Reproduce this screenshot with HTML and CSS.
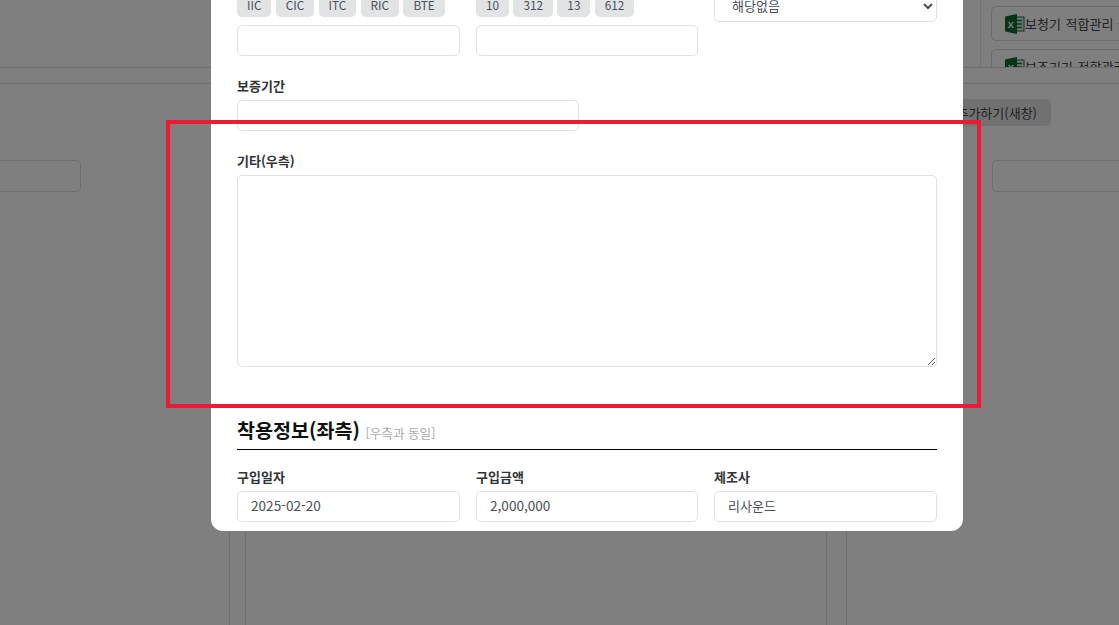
FILE: index.html
```html
<!DOCTYPE html>
<html lang="ko">
<head>
<meta charset="utf-8">
<title>착용정보</title>
<link rel="stylesheet" href="styles.css">
</head>
<body>
<div class="page">
  <header class="top">
    <div class="top-side">
      <a class="excel-btn"><svg class="xl" viewBox="0 0 20 20"><rect x="8" y="3" width="11" height="14" fill="#dfe8e2" stroke="#1d6f42"/><path d="M11 6.500h6M11 10h6M11 13.500h6" stroke="#1d6f42" stroke-width="1.500"/><path d="M0 2.500 12 0v20L0 17.500z" fill="#0f6b38"/><text x="5.800" y="13.500" class="xl-x">X</text></svg>보청기 적합관리 급여</a>
      <a class="excel-btn"><svg class="xl" viewBox="0 0 20 20"><rect x="8" y="3" width="11" height="14" fill="#dfe8e2" stroke="#1d6f42"/><path d="M11 6.500h6M11 10h6M11 13.500h6" stroke="#1d6f42" stroke-width="1.500"/><path d="M0 2.500 12 0v20L0 17.500z" fill="#0f6b38"/><text x="5.800" y="13.500" class="xl-x">X</text></svg>보조기기 적합관리 급여</a>
    </div>
  </header>
  <div class="strip"></div>
  <div class="toolbar"><button class="add-btn" type="button">추가하기(새창)</button></div>
  <div class="search-row">
    <div class="bg-input bg-left"></div>
    <div class="bg-input bg-right"></div>
  </div>
  <div class="panels">
    <div class="panel"></div>
    <div class="panel panel-mid"></div>
    <div class="panel panel-side"></div>
  </div>
</div>

<div class="overlay">
  <div class="modal">
    <div class="grid3">
      <div class="field">
        <div class="chips">
          <span class="chip">IIC</span><span class="chip">CIC</span><span class="chip">ITC</span><span class="chip">RIC</span><span class="chip">BTE</span>
        </div>
        <input class="control" type="text">
      </div>
      <div class="field">
        <div class="chips">
          <span class="chip">10</span><span class="chip">312</span><span class="chip">13</span><span class="chip">612</span>
        </div>
        <input class="control" type="text">
      </div>
      <div class="field">
        <select class="control control-ko"><option>해당없음</option></select>
      </div>
    </div>

    <div class="grid2">
      <div class="field">
        <label class="label">보증기간</label>
        <input class="control" type="text">
      </div>
    </div>

    <div class="field field-note">
      <label class="label">기타(우측)</label>
      <textarea class="control note"></textarea>
    </div>

    <h2 class="section-title">착용정보(좌측) <small class="section-note">[우측과 동일]</small></h2>

    <div class="grid3 grid-last">
      <div class="field">
        <label class="label">구입일자</label>
        <input class="control" type="text" value="2025-02-20">
      </div>
      <div class="field">
        <label class="label">구입금액</label>
        <input class="control" type="text" value="2,000,000">
      </div>
      <div class="field">
        <label class="label">제조사</label>
        <input class="control control-ko" type="text" value="리사운드">
      </div>
    </div>
  </div>
</div>

<div class="highlight"></div>
</body>
</html>
```
FILE: styles.css
```css
* { box-sizing: border-box; }
html, body { margin: 0; height: 100%; overflow: hidden; }
body {
  font-family: "Noto Sans CJK KR", "Noto Sans", sans-serif;
  font-size: 14px;
  color: #333;
  background: #fff;
}

/* page behind the dialog */
.page { height: 625px; display: flex; flex-direction: column; overflow: hidden; }
.top {
  height: 68px;
  flex: none;
  display: flex;
  justify-content: flex-end;
  border-bottom: 1px solid #dcdcdc;
  overflow: hidden;
}
.top-side {
  width: 139px;
  border-left: 1px solid #e4e4e4;
  padding: 6px 0 0 10px;
  display: flex;
  flex-direction: column;
  gap: 8px;
}
.excel-btn {
  display: flex;
  align-items: center;
  flex: none;
  width: 220px;
  height: 35px;
  padding-left: 13px;
  border: 1px solid #d8d8d8;
  border-radius: 5px;
  white-space: nowrap;
  font-size: 13px;
  word-spacing: 1px;
  color: #444;
}
.xl { width: 20px; height: 20px; flex: none; }
.xl-x { font: 700 9px "Liberation Sans", sans-serif; fill: #fff; text-anchor: middle; }
.strip { height: 16px; flex: none; border-bottom: 1px solid #dcdcdc; }
.toolbar {
  height: 76px;
  flex: none;
  padding: 15px 68px 0 0;
  display: flex;
  justify-content: flex-end;
  align-items: flex-start;
}
.add-btn {
  height: 27px;
  width: 180px;
  padding: 0 14px;
  border: 0;
  border-radius: 5px;
  background: #e2e3e5;
  font: 13px "Noto Sans CJK KR", sans-serif;
  text-align: right;
  color: #444;
}
.search-row { height: 50px; flex: none; display: flex; justify-content: space-between; }
.bg-input { height: 32px; border: 1px solid #dcdcdc; border-radius: 5px; }
.bg-left { width: 81px; border-left: 0; border-radius: 0 5px 5px 0; }
.bg-right { width: 127px; border-right: 0; border-radius: 5px 0 0 5px; }
.panels { flex: 1; display: grid; grid-template-columns: 230px 582px 273px; column-gap: 15px; }
.panel { border-right: 1px solid #dcdcdc; }
.panel-mid { border-left: 1px solid #dcdcdc; width: 582px; }
.panel-side { border-right: 0; border-left: 1px solid #dcdcdc; margin-left: 4px; }

/* dialog */
.overlay {
  position: fixed;
  inset: 0;
  background: rgba(0, 0, 0, .5);
  display: flex;
  align-items: flex-start;
  padding-left: 211px;
}
.modal {
  width: 752px;
  height: 531px;
  flex: none;
  background: #fff;
  border-radius: 0 0 12px 12px;
  padding: 0 26px 9px;
  display: flex;
  flex-direction: column;
  justify-content: flex-end;
  overflow: hidden;
}
.modal > * { flex: none; }
.grid3 { display: grid; grid-template-columns: 223px 222px 223px; column-gap: 16px; }
.grid2 { display: grid; grid-template-columns: 342px; margin-top: 21px; }
.field { display: flex; flex-direction: column; min-width: 0; }
.field-note { margin-top: 21px; }
.label {
  height: 23px;
  line-height: 17px;
  font-size: 13px;
  font-weight: 600;
  color: #333;
}
.control {
  width: 100%;
  height: 31px;
  padding: 0 13px 3px;
  border: 1px solid #dee2e6;
  border-radius: 5px;
  background: #fff;
  font: 13.6px "Noto Sans CJK KR", sans-serif;
  color: #495057;
  outline: 0;
}
.control-ko { font-size: 13px; }
.note { display: block; height: 192px; resize: vertical; }
.chips { display: flex; gap: 4.300px; margin: 4px 0 8px; }
.chip {
  height: 22px;
  padding: 0 10px;
  border-radius: 5px;
  background: #e2e3e5;
  font-size: 11.800px;
  line-height: 19px;
  color: #495057;
}
.section-title {
  margin: 48px 0 0;
  height: 35px;
  border-bottom: 1px solid #000;
  font-size: 19.600px;
  font-weight: 700;
  line-height: 29px;
  color: #111;
}
.section-note { font-size: 12.600px; font-weight: 400; color: #aaa; }
.grid-last { margin-top: 18px; }

/* annotation drawn on top of the screenshot */
.highlight {
  position: fixed;
  left: 166px;
  top: 120px;
  width: 815px;
  height: 288px;
  border: 4px solid #ed1a35;
}
```
